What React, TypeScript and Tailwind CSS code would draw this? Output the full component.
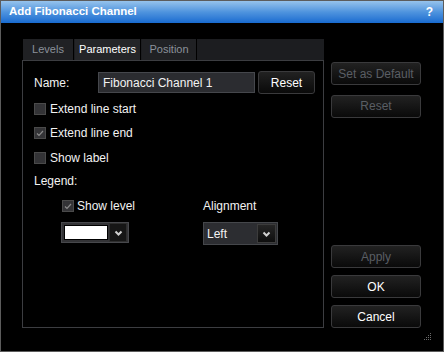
import React from 'react'

const tabs = [
  { label: 'Levels', active: false, w: 'w-[51px]' },
  { label: 'Parameters', active: true, w: 'w-[66px]' },
  { label: 'Position', active: false, w: 'w-[55px]' },
]

function Chevron() {
  return (
    <svg width="9" height="6" viewBox="0 0 9 6">
      <path d="M1.5 1.5 L4.5 4.5 L7.5 1.5" fill="none" stroke="#d0d0d0" strokeWidth="2" />
    </svg>
  )
}

function Check({ checked }: { checked?: boolean }) {
  return (
    <div className="w-[12px] h-[12px] border border-[#4a4a4a] bg-[#333336] flex items-center justify-center flex-shrink-0">
      {checked && (
        <svg width="8" height="7" viewBox="0 0 8 7">
          <path d="M1 3.5 L3 5.5 L7 1" fill="none" stroke="#8a8a8a" strokeWidth="1.2" />
        </svg>
      )}
    </div>
  )
}

function Btn({ label, disabled }: { label: string; disabled?: boolean }) {
  return (
    <button
      className={`h-[23px] w-full rounded-[3px] border border-[#3a3a3c] bg-gradient-to-b from-[#222222] to-[#0a0a0a] text-[12px] leading-none
        ${disabled ? 'text-[#5a5e64]' : 'text-white'}`}
    >
      {label}
    </button>
  )
}

export default function App() {
  return (
    <div className="relative w-[444px] h-[352px] bg-black border border-[#5c5c5c] flex flex-col text-[#f2f2f2] font-['Liberation_Sans',Arial,sans-serif]">
      {/* Title bar */}
      <div className="h-[22px] flex items-center justify-between pl-[8px] pr-[10px] bg-gradient-to-b from-[#96c3ec] via-[#4f94de] to-[#176bd0]">
        <span className="text-[11.5px] font-bold text-white">Add Fibonacci Channel</span>
        <span className="text-[12px] font-bold text-white">?</span>
      </div>

      <div className="flex pl-[21px] pt-[16px]">
        {/* Tabbed panel */}
        <div className="w-[302px] h-[289px] flex flex-col">
          <div className="h-[21px] flex ml-[1px] bg-[#1c1d20] gap-[1px]">
            {tabs.map((t) => (
              <div
                key={t.label}
                className={`${t.w} flex items-center justify-center text-[11px] border-r border-black
                  ${t.active ? 'bg-[#242528] text-white' : 'bg-[#202124] text-[#8b919a]'}`}
              >
                {t.label}
              </div>
            ))}
          </div>
          <div className="flex-1 border border-[#3c3d41] pl-[11px] pt-[11px] text-[12px] leading-[14px]">
            <div className="flex items-center h-[21px]">
              <span className="w-[64px]">Name:</span>
              <div className="w-[157px] h-[21px] bg-[#2b2c30] border border-[#45474c] flex items-center pl-[4px]">
                Fibonacci Channel 1
              </div>
              <div className="ml-[3px] w-[57px]">
                <Btn label="Reset" />
              </div>
            </div>

            <div className="flex items-center gap-[4px] h-[12px] mt-[10px]">
              <Check />
              <span>Extend line start</span>
            </div>
            <div className="flex items-center gap-[4px] h-[12px] mt-[12px]">
              <Check checked />
              <span>Extend line end</span>
            </div>
            <div className="flex items-center gap-[4px] h-[12px] mt-[13px]">
              <Check />
              <span>Show label</span>
            </div>
            <div className="h-[14px] mt-[10px]">Legend:</div>

            <div className="flex ml-[27px] mt-[12px]">
              <div className="w-[142px] flex flex-col">
                <div className="flex items-center gap-[3px] h-[12px] pl-[1px]">
                  <Check checked />
                  <span>Show level</span>
                </div>
                <div className="mt-[10px] w-[68px] h-[21px] bg-[#333336] border border-[#47484c] flex items-center pl-[2px] pr-[1px]">
                  <div className="w-[44px] h-[15px] border border-black bg-white" />
                  <div className="ml-auto w-[18px] h-[19px] bg-[#161616] border border-[#2e2e2e] flex items-center justify-center">
                    <Chevron />
                  </div>
                </div>
              </div>
              <div className="flex flex-col">
                <div className="h-[12px] flex items-center">Alignment</div>
                <div className="mt-[10px] w-[75px] h-[23px] bg-[#2c2d31] border border-[#45474b] flex items-center pl-[3px] pr-[1px]">
                  <span>Left</span>
                  <div className="ml-auto w-[19px] h-[19px] bg-gradient-to-b from-[#262626] to-[#0e0e0e] border border-[#3c3c3c] flex items-center justify-center">
                    <Chevron />
                  </div>
                </div>
              </div>
            </div>
          </div>
        </div>

        {/* Right buttons */}
        <div className="ml-[7px] w-[90px] h-[289px] pt-[23px] flex flex-col">
          <Btn label="Set as Default" disabled />
          <div className="mt-[8px]">
            <Btn label="Reset" disabled />
          </div>
          <div className="mt-auto flex flex-col gap-[7px]">
            <Btn label="Apply" disabled />
            <Btn label="OK" />
            <Btn label="Cancel" />
          </div>
        </div>
      </div>

      {/* Resize grip */}
      <svg className="absolute right-[11px] bottom-[10px]" width="8" height="8" viewBox="0 0 8 8">
        {[
          [6, 0], [6, 2], [4, 2], [6, 4], [4, 4], [2, 4], [6, 6], [4, 6], [2, 6], [0, 6],
        ].map(([x, y], i) => (
          <rect key={i} x={x} y={y} width="1" height="1" fill="#6a6a6a" />
        ))}
      </svg>
    </div>
  )
}
